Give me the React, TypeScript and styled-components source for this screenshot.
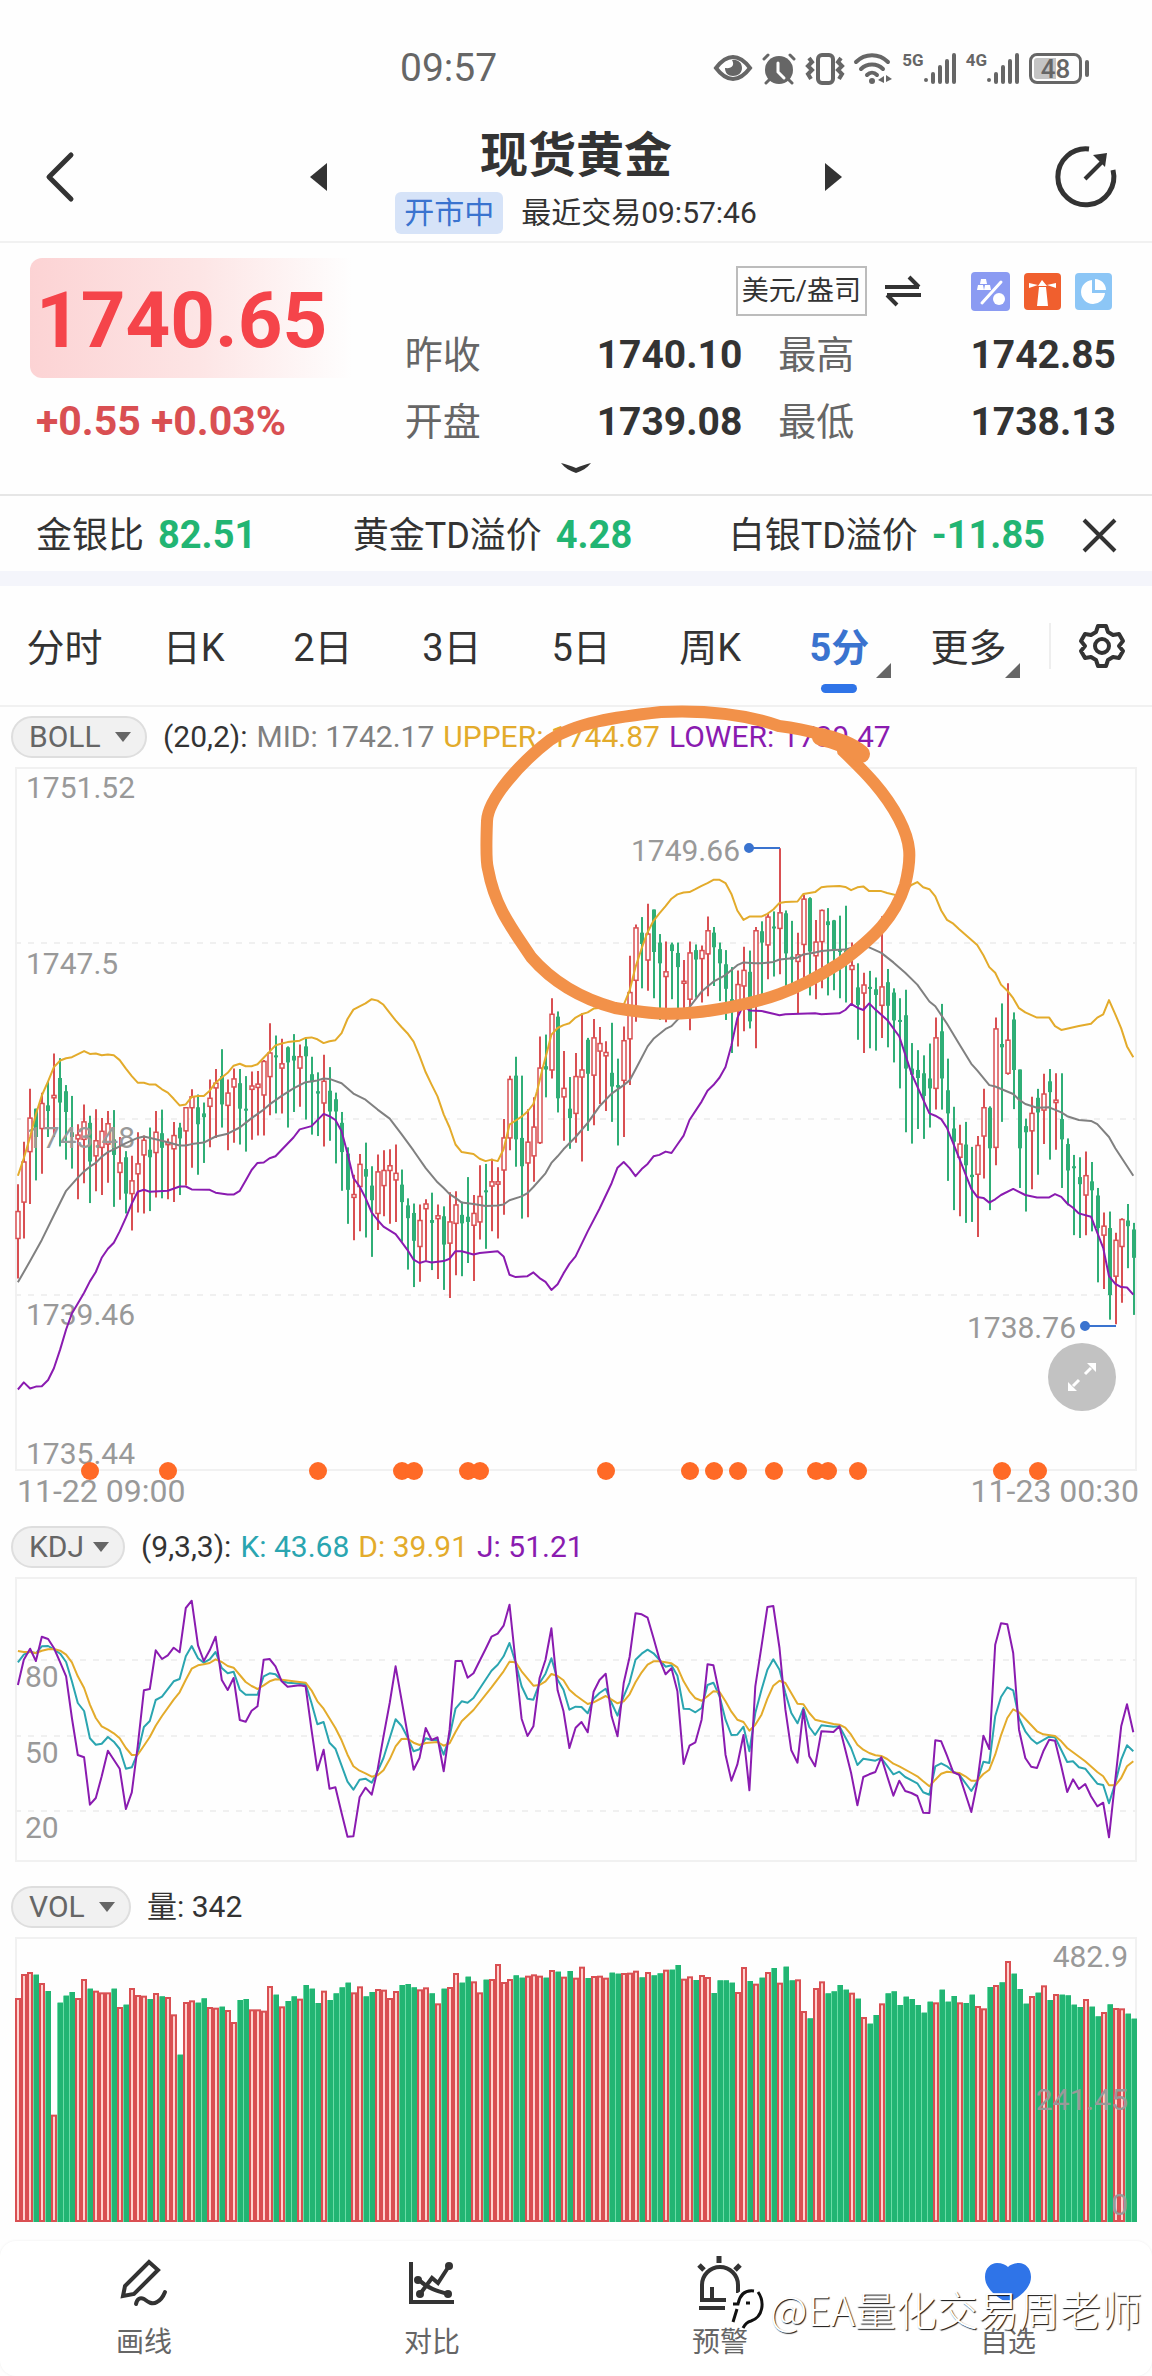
import React, { useState } from "react";
import styled, { createGlobalStyle, css } from "styled-components";

/* ---------- theme ---------- */

const color = {
  ink: "#333333",
  sub: "#666666",
  axis: "#999999",
  line: "#f1f1f1",
  band: "#f4f5fb",
  blue: "#2f74e8",
  link: "#3a73cf",
  up: "#d94f52",
  price: "#f5444a",
  down: "#22b573",
  candleDown: "#2fae76",
  gold: "#e3ab2b",
  teal: "#2aa5b0",
  purple: "#8a1bb0",
  grey: "#808080",
  marker: "#ff6a26",
  pen: "#f29149",
};

const GlobalStyle = createGlobalStyle`
  * { box-sizing: border-box; }
  body {
    margin: 0;
    background: #fefefe;
    color: ${color.ink};
    font-family: Roboto, "Noto Sans CJK SC", sans-serif;
  }
  button, select { font-family: inherit; color: inherit; }
  button { border: 0; background: none; padding: 0; cursor: pointer; }
`;

/* ---------- feed data ---------- */

const candleFeed = `
r 900 958 1015 1100|r 810 853 938 1015|r 698 760 831 942|g 740 740 800 892|r 706 729 782 878|g 682 733 745 800
r 623 712 717 800|g 633 675 727 820|g 690 703 747 848|g 713 790 800 867|r 773 796 804 932|r 731 768 805 898
g 755 770 852 940|r 741 808 840 915|r 760 788 822 923|r 745 772 815 897|g 743 805 838 948|r 800 855 875 933
g 830 843 920 962|r 840 893 920 998|r 790 857 878 960|r 797 807 838 962|g 780 827 843 957|r 745 790 833 928
g 742 792 823 930|r 803 812 816 932|r 768 797 825 938|g 770 780 803 923|r 737 738 787 903|r 699 715 738 865
g 710 737 773 880|g 727 750 758 855|r 678 718 735 822|r 656 686 696 802|g 614 671 731 780|r 678 707 733 828
r 655 677 694 812|g 656 686 740 816|g 671 740 743 831|r 661 692 699 806|r 660 688 695 797|r 637 640 711 797
r 559 622 672 754|g 585 627 631 750|r 592 645 654 750|g 608 610 642 780|g 582 628 638 747|r 604 630 654 736
g 592 608 629 763|g 630 667 684 795|g 663 703 708 798|r 626 682 728 820|g 652 702 746 808|g 706 720 746 856
g 747 770 832 914|g 822 835 912 984|r 880 922 928 1019|r 836 858 905 1000|g 812 868 884 1013|g 862 903 934 1054
r 837 874 962 997|r 828 871 903 968|r 826 861 871 984|r 816 877 891 980|g 869 901 938 1022|g 930 945 972 1081
g 941 961 1020 1118|r 943 977 1032 1107|r 932 942 952 1062|g 918 976 982 1082|r 943 967 973 1101|g 947 968 1028 1124
r 917 980 1025 1141|r 915 944 983 1093|g 937 965 983 1095|g 885 969 980 1067|r 923 962 987 1105|r 860 926 980 1017
g 857 913 917 1037|r 846 895 904 1000|r 864 895 900 1015|r 762 802 870 965|r 670 678 802 828|g 630 670 805 863
g 670 802 862 973|r 741 811 855 970|r 716 779 840 895|r 587 654 812 815|g 583 650 657 716|r 506 540 658 676
g 534 545 718 748|r 618 697 715 808|g 673 740 760 825|r 622 672 750 812|r 538 658 673 852|g 590 594 666 787
r 550 590 669 775|r 567 602 618 730|r 597 621 628 745|g 558 664 693 768|g 634 690 695 818|r 566 596 680 800
r 416 494 592 690|r 350 357 468 556|g 334 367 391 485|r 306 370 425 490|g 318 318 408 506|g 370 388 432 552
r 386 450 460 557|g 388 392 406 508|g 388 410 440 545|r 425 470 474 550|r 386 410 508 574|g 392 404 424 505
r 394 405 422 515|r 333 363 412 502|g 355 367 398 480|g 388 402 432 512|g 404 434 486 552|g 440 508 516 622
r 447 477 520 608|r 397 447 480 576|g 405 450 555 570|r 355 363 508 612|g 343 364 388 502|r 326 334 393 466
g 322 354 358 460|r 188 325 358 455|g 320 326 411 495|g 342 418 424 495|r 367 414 428 538|r 287 296 392 480
g 292 294 407 500|r 340 387 416 508|r 318 320 386 485|g 315 343 351 500|g 340 341 405 489|g 331 403 408 506
g 310 405 425 515|r 388 437 445 520|g 432 483 520 594|r 452 478 495 622|g 448 482 485 612|g 462 487 499 617
r 332 482 521 590|g 444 472 522 610|g 485 494 553 642|g 506 552 555 697|g 488 542 655 790|g 601 655 668 814
g 616 658 675 783|g 627 665 713 804|g 602 676 697 780|r 547 590 697 742|g 518 576 676 742|g 634 701 750 893
g 736 782 810 955|r 774 815 843 968|g 768 816 860 982|g 821 880 885 980|r 798 818 879 1012|r 698 738 798 888
g 735 738 824 955|r 547 571 822 860|g 517 603 610 768|r 474 595 665 668|g 536 551 658 741|g 657 657 824 908
g 761 777 790 958|r 715 750 787 911|g 698 717 748 880|r 666 709 743 815|g 656 682 705 848|r 665 722 727 827
g 665 762 805 908|g 803 815 871 945|g 838 862 864 1008|g 843 885 900 1014|r 831 882 923 1008|g 853 894 913 1000
g 908 924 993 1108|r 960 989 1008 1122|g 958 993 1135 1187|r 1003 1019 1095 1197|r 972 975 1032 1151|g 942 977 989 1078
g 982 996 1056 1177`;

type Candle = { up: boolean; high: number; top: number; bottom: number; low: number };

const candles: Candle[] = candleFeed
  .trim()
  .split(/[|\n]/)
  .map((row) => {
    const [dir, ...v] = row.trim().split(" ");
    const [high, top, bottom, low] = v.map(Number);
    return { up: dir === "r", high, top, bottom, low };
  });

const volumeFeed = `238 166 160 165 193 214 588 249 228 217 238 181 207 216 221 221 207 265 255 208 229 231 238 223 230 235
287 405 250 245 249 236 265 267 261 274 310 241 238 272 272 276 202 225 263 244 230 240 196 207 250 216 241 221 203 189
221 203 230 217 211 213 238 217 196 193 203 212 206 221 254 207 205 163 189 171 188 221 180 181 136 190 181 167 174 171
167 171 174 154 156 174 154 177 144 175 172 171 177 159 162 163 162 156 173 160 167 161 153 150 136 180 173 181 169 175
220 182 182 189 220 145 184 195 174 160 145 192 141 182 182 277 296 208 188 221 215 196 210 222 237 295 312 286 254 221
215 256 231 238 256 279 246 251 210 246 229 251 250 225 262 269 202 199 188 127 162 208 252 232 219 200 241 226 225 227
255 262 241 261 290 280 254 268 269 282 297`
  .split(/\s+/)
  .map(Number);

// every curve arrives in two pages; the second continues where the first ends
type Curve = [string, string];

const upper: Curve = [
  "50,882 66,845 83,800 99,752 115,712 132,682 148,652 165,638 181,633 197,631 230,618 246,624 262,623 278,627 295,625 311,627 327,637 344,655 360,671 376,685 393,685 409,689 425,689 442,699 458,706 474,719 490,733 507,731 523,715 540,713 556,713 572,702 588,685 605,674 621,664 637,649 654,645 670,650 686,650 702,646 719,632 735,619 751,606 768,602 784,599 817,596 833,590 849,589 865,593 882,601 898,597 914,595 931,580 947,550 963,530 980,523 996,517 1013,508 1029,511 1045,520 1062,537 1078,553 1094,567 1110,580 1127,598 1143,628 1160,663 1176,689 1192,714 1209,752 1225,780 1241,816 1258,832 1290,836 1307,846 1323,851 1339,848 1356,851 1372,826 1388,774 1405,765 1421,757 1437,746 1453,730 1463,703 1478,655 1490,620 1502,583 1519,569 1535,563 1551,559 1568,547",
  "16,540 33,536 49,528 98,524 131,520 147,490 163,440 180,400 196,366 212,342 228,326 245,311 261,295 277,286 294,282 310,281 326,275 343,268 359,262 375,255 392,255 408,262 424,285 440,320 457,340 473,333 506,333 522,327 538,318 555,304 571,302 604,301 620,285 636,283 652,281 669,271 685,269 718,268 734,270 750,277 767,271 783,269 799,279 832,279 848,283 865,286 881,290 914,266 930,260 946,271 963,275 979,290 995,320 1011,340 1028,348 1044,360 1093,393 1110,415 1126,440 1142,452 1158,477 1175,490 1191,506 1207,527 1224,536 1256,547 1289,547 1305,565 1322,573 1370,565 1403,560 1420,547 1436,540 1452,510 1469,540 1485,570 1501,608 1518,631",
];
const middle: Curve = [
  "50,1108 83,1063 115,1018 148,966 181,914 213,886 230,873 246,863 262,855 278,842 295,832 311,826 344,813 376,802 393,799 425,805 458,811 490,818 507,818 523,815 556,812 588,799 621,793 654,780 686,760 719,742 735,731 768,713 800,697 833,684 865,680 882,676 898,677 931,686 963,708 996,721 1029,742 1062,761 1094,794 1127,829 1160,866 1192,896 1209,908 1225,921 1241,929 1258,939 1290,942 1323,946 1356,945 1372,943 1388,934 1421,926 1437,919 1453,906 1486,877 1502,855 1519,841 1535,826 1568,800",
  "33,770 65,735 98,708 131,690 147,680 163,657 196,608 212,592 245,571 261,565 294,538 310,525 343,492 375,471 408,457 440,436 457,430 489,432 506,432 538,429 555,424 604,420 620,413 652,409 669,406 702,404 734,403 767,395 799,398 832,410 865,430 897,452 930,477 963,513 979,523 1011,560 1044,603 1077,645 1093,659 1126,690 1142,693 1191,709 1207,721 1224,730 1256,738 1289,737 1322,748 1338,756 1370,764 1403,766 1420,773 1452,800 1469,824 1518,882",
];
const lower: Curve = [
  "50,1335 66,1320 83,1333 99,1329 115,1328 132,1315 148,1290 165,1250 181,1208 197,1174 213,1153 230,1130 246,1106 262,1086 278,1056 295,1037 311,1024 327,1000 344,971 360,941 376,916 393,912 409,916 458,914 490,905 507,905 523,911 572,912 588,918 621,922 637,922 654,914 670,892 686,870 702,855 719,854 735,845 751,841 768,827 800,801 817,784 849,777 882,751 898,756 914,764 931,788 947,835 963,887 980,905 996,929 1013,960 1029,976 1045,990 1078,1006 1094,1022 1110,1039 1127,1060 1143,1067 1160,1063 1176,1066 1209,1063 1225,1058 1241,1042 1258,1042 1290,1049 1307,1046 1356,1042 1372,1053 1388,1092 1405,1097 1437,1095 1453,1087 1470,1099 1486,1107 1502,1124 1519,1112 1535,1089 1551,1069 1568,1053",
  "33,1000 65,952 98,898 114,865 131,853 147,866 163,883 180,868 196,857 212,841 228,838 245,831 261,834 277,816 294,797 310,764 343,725 359,702 375,690 392,674 408,652 424,606 440,548 457,520 473,532 506,533 538,539 555,542 571,540 652,538 669,540 718,538 734,531 750,518 767,526 783,531 799,517 816,530 848,552 881,587 897,625 914,665 963,750 979,755 995,762 1011,781 1044,845 1077,910 1093,927 1110,929 1126,939 1142,932 1158,923 1191,910 1224,923 1256,928 1289,928 1305,921 1322,927 1338,941 1354,950 1370,962 1403,969 1436,1035 1452,1095 1469,1111 1485,1118 1501,1119 1518,1134",
];
const kdjJ: Curve = [
  "50,556 66,480 83,447 99,484 115,411 132,418 148,445 165,488 181,530 197,655 213,766 230,773 246,915 262,895 278,830 295,753 327,807 344,928 360,878 376,740 393,572 409,568 425,452 442,478 458,467 474,444 490,458 507,325 523,303 540,437 556,484 572,452 588,411 605,541 621,571 637,535 654,661 670,666 686,633 702,620 719,480 735,478 751,500 768,545 784,561 817,557 833,560 849,690 865,812 882,750 898,867 914,863 931,940 947,1011 963,1010 980,893 996,864 1013,885 1029,810 1045,710 1062,610 1078,500 1094,600 1110,700 1127,810 1143,775 1160,685 1176,721 1192,713 1209,815 1225,690 1241,484 1258,484 1274,534 1290,521 1307,483 1323,448 1339,411 1356,402 1372,378 1388,315 1405,490 1421,657 1437,709 1453,680 1470,535 1486,480 1502,386 1519,572 1535,635 1551,745 1568,684",
  "16,667 33,698 49,576 65,541 82,522 98,650 114,710 131,550 147,472 163,341 180,344 196,354 212,415 228,478 245,524 261,506 277,575 294,793 310,738 326,728 343,660 359,494 375,497 392,585 408,765 424,843 440,795 457,706 473,872 489,560 506,440 522,322 538,319 555,445 571,630 587,752 604,789 620,630 636,770 652,800 669,695 702,697 718,680 734,750 750,820 767,917 783,832 799,824 816,817 832,773 848,830 865,888 881,843 897,874 914,880 930,889 946,939 963,940 979,722 995,725 1011,768 1028,818 1044,825 1077,937 1093,850 1110,708 1126,748 1142,435 1158,371 1175,374 1191,460 1207,690 1224,775 1240,801 1256,805 1273,755 1289,720 1305,723 1322,800 1338,877 1354,839 1370,868 1387,853 1403,890 1420,920 1436,909 1452,1013 1469,840 1485,680 1501,614 1518,698",
];
const kdjK: Curve = [
  "50,488 66,465 83,456 99,461 115,440 132,439 148,449 165,462 181,487 197,545 213,610 230,634 246,716 262,735 278,732 295,712 311,726 327,748 344,807 360,803 376,760 393,682 409,664 425,601 442,591 474,545 490,538 507,470 523,439 540,476 556,489 572,479 588,457 605,505 621,521 637,516 654,570 670,585 702,585 719,530 735,521 751,524 768,543 784,549 833,553 849,610 865,674 882,667 898,729 914,747 947,846 963,870 980,840 996,837 1013,849 1029,815 1045,775 1078,659 1094,678 1110,712 1127,755 1143,749 1160,716 1176,721 1192,720 1209,765 1225,710 1241,627 1258,605 1274,609 1290,595 1339,513 1356,495 1372,470 1388,430 1405,490 1421,560 1437,597 1453,600 1470,550 1486,522 1502,476 1519,540 1535,570 1551,630 1568,621",
  "16,622 33,641 49,597 65,580 82,567 98,610 114,648 131,590 147,548 163,480 180,462 196,450 212,461 228,480 245,501 261,497 277,528 294,627 310,628 326,638 343,625 359,556 375,549 392,590 408,660 424,706 440,705 457,681 473,755 489,640 506,570 522,510 538,479 555,510 571,580 587,640 604,671 620,625 636,682 652,706 669,677 702,681 718,680 750,745 767,796 783,777 816,783 832,775 865,824 881,816 897,832 930,851 946,878 963,885 979,800 995,791 1011,800 1028,816 1044,825 1077,874 1093,845 1110,786 1126,790 1142,650 1158,592 1175,563 1191,572 1207,655 1224,695 1240,718 1256,732 1289,711 1305,713 1338,787 1354,785 1370,803 1387,807 1420,852 1436,856 1452,911 1469,850 1485,780 1501,737 1518,755",
];
const kdjD: Curve = [
  "50,454 66,457 83,457 99,460 115,453 132,449 148,448 165,453 181,465 197,488 213,530 230,565 246,615 262,655 278,680 295,690 311,701 327,716 344,745 360,766 376,765 393,738 409,712 425,678 442,649 474,600 490,578 507,540 523,507 540,497 556,494 572,490 588,479 605,487 621,499 637,504 654,526 670,547 686,559 702,568 719,557 735,545 751,539 768,540 800,545 833,549 849,572 865,605 882,627 914,685 931,722 947,765 963,800 980,813 996,821 1013,831 1029,827 1045,812 1062,779 1078,740 1094,718 1110,717 1127,729 1143,736 1160,730 1192,727 1209,738 1225,731 1241,697 1258,665 1290,631 1339,563 1372,515 1388,486 1405,488 1421,515 1453,558 1470,556 1486,545 1502,523 1519,529 1535,542 1551,570 1568,587",
  "33,613 49,608 82,589 98,600 114,611 131,605 147,584 163,548 180,518 196,495 212,485 228,485 261,491 277,503 294,545 310,575 326,596 343,603 359,590 375,575 392,577 408,605 424,636 440,660 457,667 473,693 489,675 506,645 522,597 538,558 555,543 571,550 604,612 620,614 636,640 652,660 669,665 702,673 718,675 734,684 750,705 767,735 783,750 799,760 816,767 832,769 848,778 865,792 881,800 914,820 930,830 946,845 963,860 979,840 995,822 1011,816 1044,820 1061,830 1077,843 1093,843 1110,823 1126,810 1142,765 1158,707 1175,655 1191,629 1207,638 1256,695 1273,704 1305,709 1322,725 1338,745 1387,785 1420,817 1436,830 1452,857 1469,857 1485,835 1501,800 1518,785",
];

/* ---------- scales ---------- */

const WIDTH = 1122;
const STEP = 6;
const FEED_PAGE = 1568;

const slotX = (i: number) => 3 + i * STEP;
const curveX = (v: number) => (v - 42) / 2.722;
const priceY = (v: number) => (v - 16) / 2.119;
const kdjY = (v: number) => (v - 232) / 3;
const volumeY = (v: number) => (v - 52) / 3;

const toPoints = (curve: Curve, y: (v: number) => number) =>
  curve
    .flatMap((page, n) =>
      page.split(" ").map((pair) => {
        const [a, b] = pair.split(",").map(Number);
        return `${curveX(a + n * FEED_PAGE).toFixed(1)},${y(b).toFixed(1)}`;
      })
    )
    .join(" ");

/* ---------- shared parts ---------- */

const Page = styled.main`
  position: relative;
  width: 100%;
  overflow: hidden;
`;

const Row = styled.div<{ $gap?: number }>`
  display: flex;
  align-items: center;
  gap: ${(p) => p.$gap ?? 0}px;
`;

const Glyph = styled.svg<{ $w: number; $h: number }>`
  display: block;
  flex: none;
  width: ${(p) => p.$w}px;
  height: ${(p) => p.$h}px;
  overflow: visible;
`;

/* ---------- status bar ---------- */

const StatusBar = styled.div`
  display: grid;
  grid-template-columns: 400fr 752fr;
  align-items: center;
  height: 120px;
  padding-top: 16px;
  color: ${color.sub};
`;

const Clock = styled.time`
  grid-column: 2;
  grid-row: 1;
  font-size: 39px;
  line-height: 48px;
`;

const StatusIcons = styled.div`
  grid-column: 2;
  grid-row: 1;
  justify-self: end;
  display: flex;
  align-items: center;
  gap: 10px;
  margin-right: 70px;
`;

const NetLabel = styled.span`
  align-self: flex-start;
  font-size: 17px;
  line-height: 14px;
  font-weight: 700;
`;

const Battery = styled.span`
  position: relative;
  display: block;
  width: 53px;
  height: 31px;
  border: 3px solid ${color.sub};
  border-radius: 8px;
  background: linear-gradient(90deg, #c4c4c4 22px, transparent 22px) content-box;
  padding: 2px;
  font-size: 26px;
  line-height: 22px;
  font-weight: 500;
  text-align: center;

  &::after {
    content: "";
    position: absolute;
    right: -10px;
    top: 4px;
    width: 4px;
    height: 17px;
    border-radius: 2px;
    background: ${color.sub};
  }
`;

const Signal = ({ label }: { label: string }) => (
  <Row>
    <NetLabel>{label}</NetLabel>
    <Glyph $w={32} $h={31} viewBox="0 0 32 31" stroke={color.sub} strokeWidth={4} strokeLinecap="round">
      <path d="M2 27v0M9 21v8M16 14v15M23 8v21M30 2v27" />
    </Glyph>
  </Row>
);

const Status = () => (
  <StatusBar>
    <Clock>09:57</Clock>
    <StatusIcons>
      <Glyph $w={38} $h={26} viewBox="0 0 38 26" fill="none" stroke={color.sub} strokeWidth={4}>
        <path d="M2 13C8 5 13 2 19 2s11 3 17 11c-6 8-11 11-17 11S8 21 2 13z" />
        <path d="M18 5c3 5 0 9-7 8 0 5 3 8 8 8s9-3 9-8-4-9-10-8z" fill={color.sub} stroke="none" />
      </Glyph>
      <Glyph $w={34} $h={31} viewBox="0 0 34 31" fill="none" stroke={color.sub} strokeWidth={3} strokeLinecap="round">
        <circle cx="17" cy="17" r="14" fill={color.sub} stroke="none" />
        <path d="M2 6l4-4M32 6l-4-4M7 27l-3 3M27 27l3 3" />
        <path d="M16 10v9l6 6" stroke="#fff" />
      </Glyph>
      <Glyph $w={38} $h={31} viewBox="0 0 38 31" fill="none" stroke={color.sub} strokeWidth={4}>
        <rect x="12" y="2" width="15" height="28" rx="4" />
        <path d="M3 5l3 4-4 4 4 4-4 4 3 5M35 5l-3 4 4 4-4 4 4 4-3 5" />
      </Glyph>
      <Glyph $w={38} $h={31} viewBox="0 0 38 31" fill="none" stroke={color.sub} strokeWidth={4} strokeLinecap="round">
        <path d="M2 9C11 0 25 0 34 9M7 16c6-6 16-6 22 0M13 22c3-3 7-3 10 0" />
        <circle cx="18" cy="28" r="3" fill={color.sub} stroke="none" />
        <path d="M30 23v7l-6-3zM32 22v7l6-3z" fill={color.sub} stroke="none" />
      </Glyph>
      <Signal label="5G" />
      <Signal label="4G" />
      <Battery>48</Battery>
    </StatusIcons>
  </StatusBar>
);

/* ---------- title bar ---------- */

const TitleBar = styled.header`
  display: grid;
  grid-template-columns: 1fr minmax(0, 532px) 1fr;
  align-items: center;
  height: 123px;
  padding: 0 35px 8px;
  border-bottom: 2px solid ${color.line};
`;

const BackButton = styled.button`
  justify-self: start;
  padding: 8px 11px;
`;

const RefreshButton = styled.button`
  justify-self: end;
`;

const Switcher = styled.div`
  display: flex;
  align-items: center;
  justify-content: space-between;
`;

const Heading = styled.div`
  text-align: center;
`;

const Title = styled.h1`
  margin: 8px 0;
  font-size: 48px;
  line-height: 56px;
  font-weight: 700;
`;

const Badge = styled.span`
  padding: 0 9px;
  border-radius: 6px;
  background: #d6e3f8;
  color: ${color.link};
  font-size: 30px;
  line-height: 42px;
`;

const LastTrade = styled.span`
  font-size: 30px;
  line-height: 42px;
`;

const Header = () => (
  <TitleBar>
    <BackButton aria-label="返回">
      <Glyph $w={28} $h={50} viewBox="0 0 28 50" fill="none" stroke={color.ink} strokeWidth={5} strokeLinecap="round" strokeLinejoin="round">
        <path d="M25 3L3 25l22 22" />
      </Glyph>
    </BackButton>
    <Switcher>
      <button aria-label="上一个">
        <Glyph $w={17} $h={28} viewBox="0 0 17 28" fill={color.ink}>
          <path d="M17 0v28L0 14z" />
        </Glyph>
      </button>
      <Heading>
        <Title>现货黄金</Title>
        <Row $gap={18}>
          <Badge>开市中</Badge>
          <LastTrade>最近交易09:57:46</LastTrade>
        </Row>
      </Heading>
      <button aria-label="下一个">
        <Glyph $w={17} $h={28} viewBox="0 0 17 28" fill={color.ink}>
          <path d="M0 0v28l17-14z" />
        </Glyph>
      </button>
    </Switcher>
    <RefreshButton aria-label="刷新">
      <Glyph $w={62} $h={62} viewBox="0 0 62 62" fill="none" stroke={color.ink} strokeWidth={5}>
        <path d="M34 3A28 28 0 1 0 58 24" />
        <path d="M30 33L48 15" strokeWidth={4} />
        <path d="M38 9l14-2-2 14z" fill={color.ink} stroke="none" />
      </Glyph>
    </RefreshButton>
  </TitleBar>
);

/* ---------- quote ---------- */

const QuoteGrid = styled.section`
  display: grid;
  grid-template-columns: 375fr 712fr;
  padding: 15px 36px 0 30px;
`;

const PriceBox = styled.div`
  display: flex;
  align-items: center;
  height: 120px;
  margin: 0 36px 10px 0;
  padding: 4px 0 0 6px;
  border-radius: 12px;
  background: linear-gradient(90deg, #fcd3d4, #fde5e5 50%, #fefefe 95%);
  color: ${color.price};
  font-size: 78px;
  font-weight: 700;
`;

const Change = styled.div`
  padding-left: 6px;
  color: ${color.up};
  font-size: 41px;
  line-height: 66px;
  font-weight: 700;
`;

const Tools = styled.div`
  display: flex;
  align-items: center;
  justify-content: flex-end;
  height: 63px;
  padding: 3px 4px 0 0;
`;

const UnitButton = styled.button`
  height: 50px;
  padding: 0 4px;
  border: 2px solid #bcbcbc;
  font-size: 27px;
  line-height: 46px;
`;

const SwapButton = styled.button`
  margin: 0 50px 0 18px;
`;

const Stats = styled.dl`
  display: grid;
  grid-template-columns: 1fr 1fr;
  column-gap: 36px;
  margin: 0;
  padding-top: 1px;
`;

const Stat = styled.div`
  display: flex;
  justify-content: space-between;
  line-height: 67px;

  dt {
    color: ${color.sub};
    font-size: 38px;
  }
  dd {
    margin: 0;
    font-size: 39px;
    font-weight: 700;
  }
`;

const ExpandRow = styled.div`
  display: flex;
  justify-content: center;
  align-items: center;
  height: 40px;
  padding-bottom: 15px;
  border-bottom: 2px solid #e6e6e6;
`;

const stats = [
  ["昨收", "1740.10"],
  ["最高", "1742.85"],
  ["开盘", "1739.08"],
  ["最低", "1738.13"],
];

const Quote = () => (
  <>
    <QuoteGrid>
      <div>
        <PriceBox>1740.65</PriceBox>
        <Change>+0.55 +0.03%</Change>
      </div>
      <div>
        <Tools>
          <UnitButton>美元/盎司</UnitButton>
          <SwapButton aria-label="切换单位">
            <Glyph $w={36} $h={30} viewBox="0 0 36 30" fill="none" stroke={color.ink} strokeWidth={4}>
              <path d="M0 11h34M24 1l10 10M36 19H2M12 29L2 19" />
            </Glyph>
          </SwapButton>
          <Row $gap={14}>
            <Glyph $w={39} $h={39} viewBox="0 0 39 39">
              <rect width="39" height="39" rx="4" fill="#8b9bf2" />
              <path d="M11 31L30 10" stroke="#fff" strokeWidth="3" strokeLinecap="round" />
              <circle cx="28" cy="27" r="6" fill="#fff" />
              <path d="M10 7h5l1 5H9zM7 13h5l1 5H6zM14 13h5l1 5h-7z" fill="#fff" />
            </Glyph>
            <Glyph $w={37} $h={37} viewBox="0 0 37 37">
              <rect width="37" height="37" rx="4" fill="#f05f2e" />
              <path d="M15 14h7l2 19H13zM14 13l4-6 5 6z" fill="#fff" />
              <path d="M5 10l9 2-9 3zM32 10l-9 2 9 3z" fill="#fff" />
            </Glyph>
            <Glyph $w={37} $h={37} viewBox="0 0 37 37">
              <rect width="37" height="37" rx="4" fill="#8cc6f6" />
              <path d="M17 7v13h13A12 12 0 1 1 17 7z" fill="#fff" />
              <path d="M20 6c6 0 11 5 11 11H20z" fill="#fff" />
            </Glyph>
          </Row>
        </Tools>
        <Stats>
          {stats.map(([name, value]) => (
            <Stat key={name}>
              <dt>{name}</dt>
              <dd>{value}</dd>
            </Stat>
          ))}
        </Stats>
      </div>
    </QuoteGrid>
    <ExpandRow>
      <button aria-label="展开">
        <Glyph $w={30} $h={10} viewBox="0 0 30 10" fill={color.ink}>
          <path d="M0 0c5 1 10 3 15 5C20 3 25 1 30 0c-4 5-9 8-15 10C9 8 4 5 0 0z" />
        </Glyph>
      </button>
    </ExpandRow>
  </>
);

/* ---------- ratios ---------- */

const RatioBar = styled.section`
  display: flex;
  align-items: center;
  gap: 38px;
  height: 90px;
  padding: 3px 36px 0;
  border-bottom: 15px solid ${color.band};
`;

const RatioList = styled.div`
  display: flex;
  flex: 1;
  justify-content: space-between;
  font-size: 36px;
  line-height: 48px;
`;

const RatioValue = styled.b`
  margin-left: 14px;
  color: ${color.down};
  font-size: 38px;
`;

const ratios = [
  ["金银比", "82.51"],
  ["黄金TD溢价", "4.28"],
  ["白银TD溢价", "-11.85"],
];

const Ratios = () => (
  <RatioBar>
    <RatioList>
      {ratios.map(([name, value]) => (
        <span key={name}>
          {name}
          <RatioValue>{value}</RatioValue>
        </span>
      ))}
    </RatioList>
    <button aria-label="关闭">
      <Glyph $w={33} $h={33} viewBox="0 0 33 33" stroke={color.ink} strokeWidth={4}>
        <path d="M1 1l31 31M32 1L1 32" />
      </Glyph>
    </button>
  </RatioBar>
);

/* ---------- period tabs ---------- */

const PeriodBar = styled.nav`
  display: flex;
  align-items: center;
  height: 121px;
  border-bottom: 2px solid ${color.line};
`;

const Period = styled.button<{ $active: boolean }>`
  position: relative;
  flex: 1;
  height: 119px;
  padding-bottom: 2px;
  font-size: 38px;
  ${(p) =>
    p.$active &&
    css`
      color: ${color.link};
      font-weight: 700;

      &::before {
        content: "";
        position: absolute;
        left: calc(50% - 18px);
        bottom: 12px;
        width: 36px;
        height: 9px;
        border-radius: 5px;
        background: ${color.blue};
      }
    `}
`;

const Corner = styled.i`
  position: absolute;
  left: calc(50% + 37px);
  bottom: 27px;
  border-left: 15px solid transparent;
  border-bottom: 15px solid ${color.sub};
`;

const SettingsButton = styled.button`
  display: flex;
  justify-content: center;
  width: 103px;
  margin-left: 16px;
  border-left: 2px solid #eeeeee;
`;

const periods = ["分时", "日K", "2日", "3日", "5日", "周K", "5分", "更多"];

const Periods = () => {
  const [active, setActive] = useState("5分");
  return (
    <PeriodBar>
      {periods.map((name, i) => (
        <Period key={name} $active={name === active} onClick={() => setActive(name)}>
          {name}
          {i > 5 && <Corner />}
        </Period>
      ))}
      <SettingsButton aria-label="设置">
        <Glyph $w={44} $h={46} viewBox="0 0 44 46" fill="none" stroke={color.ink} strokeWidth={4} strokeLinejoin="round">
          <path d="M18 3h8l2 6 5 3 6-1 4 7-4 5 4 5-4 7-6-1-5 3-2 6h-8l-2-6-5-3-6 1-4-7 4-5-4-5 4-7 6 1 5-3z" />
          <circle cx="22" cy="23" r="7" />
        </Glyph>
      </SettingsButton>
    </PeriodBar>
  );
};

/* ---------- indicator panels ---------- */

const LegendRow = styled.div`
  display: flex;
  align-items: center;
  gap: 9px;
  height: 60px;
  padding-left: 11px;
  font-size: 30px;
  line-height: 40px;
  white-space: nowrap;
`;

const PillBox = styled.label<{ $width: number }>`
  display: flex;
  align-items: center;
  position: relative;
  width: ${(p) => p.$width}px;
  height: 42px;
  margin-right: 7px;
`;

const PillSelect = styled.select`
  appearance: none;
  width: 100%;
  height: 42px;
  padding: 0 0 0 16px;
  border: 2px solid #dedede;
  border-radius: 21px;
  background: #f1f1f1;
  color: ${color.sub};
  font-size: 30px;
  line-height: 38px;
`;

const PillArrow = styled.i`
  position: absolute;
  right: 16px;
  border: 8px solid transparent;
  border-top: 10px solid ${color.sub};
  border-bottom: 0;
  pointer-events: none;
`;

const Legend = styled.span<{ $tone?: string }>`
  color: ${(p) => p.$tone ?? color.ink};
`;

const IndicatorPill = ({ value, options, width }: { value: string; options: string[]; width: number }) => (
  <PillBox $width={width}>
    <PillSelect aria-label="指标" defaultValue={value}>
      {options.map((o) => (
        <option key={o}>{o}</option>
      ))}
    </PillSelect>
    <PillArrow />
  </PillBox>
);

const Panel = styled.div`
  position: relative;
  margin: 0 15px;
`;

const Plot = styled.svg`
  display: block;
  width: 100%;
  height: auto;
  overflow: visible;
`;

const AxisText = styled.text`
  fill: ${color.axis};
  font-size: 30px;
`;

const Frame = ({ height }: { height: number }) => (
  <rect x="1" y="1" width={WIDTH - 2} height={height - 2} fill="none" stroke={color.line} strokeWidth="2" />
);

const Grid = ({ rows }: { rows: number[] }) => (
  <g stroke="#f0f0f0" strokeWidth="2" strokeDasharray="6 7">
    {rows.map((y) => (
      <path key={y} d={`M0 ${y}H${WIDTH}`} />
    ))}
  </g>
);

const Line = ({ points, tone }: { points: string; tone: string }) => (
  <polyline points={points} fill="none" stroke={tone} strokeWidth="2" strokeLinejoin="round" />
);

const DateRow = styled.div`
  display: flex;
  justify-content: space-between;
  height: 46px;
  margin: 0 13px 0 17px;
  color: ${color.axis};
  font-size: 32px;
  line-height: 40px;
`;

const FullscreenButton = styled.button`
  position: absolute;
  right: 21px;
  bottom: 60px;
  display: flex;
  align-items: center;
  justify-content: center;
  width: 68px;
  height: 68px;
  border-radius: 50%;
  background: #c2c2c2;
`;

const eventMarks = [75, 153, 303, 387, 399, 453, 465, 591, 675, 699, 723, 759, 801, 813, 843, 987, 1023];

const priceLabels: [string, number][] = [
  ["1751.52", 31],
  ["1747.5", 207],
  ["1743.48", 381],
  ["1739.46", 558],
  ["1735.44", 697],
];

const PricePlot = () => (
  <Plot viewBox={`0 0 ${WIDTH} 704`} role="img" aria-label="BOLL">
    <Frame height={704} />
    <Grid rows={[176, 352, 528]} />
    {candles.map((c, i) => {
      const x = slotX(i);
      const top = priceY(c.top);
      const height = Math.max(priceY(c.bottom) - top, 2);
      return c.up ? (
        <g key={i} stroke={color.up}>
          <path d={`M${x} ${priceY(c.high)}V${top}M${x} ${top + height}V${priceY(c.low)}`} strokeWidth="2" />
          <rect x={x - 2} y={top} width="4" height={height} fill="#fff" strokeWidth="1.5" />
        </g>
      ) : (
        <g key={i} fill={color.candleDown}>
          <rect x={x - 1} y={priceY(c.high)} width="2" height={priceY(c.low) - priceY(c.high)} />
          <rect x={x - 2} y={top} width="4" height={height} />
        </g>
      );
    })}
    {priceLabels.map(([text, y]) => (
      <AxisText key={text} x="11" y={y}>
        {text}
      </AxisText>
    ))}
    <Line points={toPoints(middle, priceY)} tone={color.grey} />
    <Line points={toPoints(upper, priceY)} tone={color.gold} />
    <Line points={toPoints(lower, priceY)} tone={color.purple} />
    {eventMarks.map((x) => (
      <circle key={x} cx={x} cy="704" r="9" fill={color.marker} />
    ))}
    <g stroke={color.link} strokeWidth="2" fill={color.link}>
      <path d="M734 81h31M1070 559h31" />
      <circle cx="734" cy="81" r="4" />
      <circle cx="1070" cy="559" r="4" />
    </g>
    <AxisText x="725" y="94" textAnchor="end">
      1749.66
    </AxisText>
    <AxisText x="1061" y="571" textAnchor="end">
      1738.76
    </AxisText>
    <g fill="none" stroke={color.pen} strokeLinecap="round" strokeLinejoin="round">
      <path
        strokeWidth="12"
        d="M841-18C815-32 790-38 764-41C730-53 690-57 646-55C600-50 560-44 535-27C505-4 473 32 472 54C471 80 471 95 473 102C480 140 496 160 516 190C535 212 560 230 600 241C640 248 665 249 705 242C750 234 780 225 825 196C860 170 880 150 890 118C897 90 896 75 884 52C870 25 850 5 828-16"
      />
      <path strokeWidth="18" d="M806-30C822-27 838-20 846-13" />
    </g>
  </Plot>
);

const PricePanel = () => (
  <section>
    <LegendRow>
      <IndicatorPill value="BOLL" options={["BOLL", "MA", "EMA"]} width={136} />
      <Legend>(20,2):</Legend>
      <Legend $tone={color.grey}>MID: 1742.17</Legend>
      <Legend $tone={color.gold}>UPPER: 1744.87</Legend>
      <Legend $tone={color.purple}>LOWER: 1739.47</Legend>
    </LegendRow>
    <Panel>
      <PricePlot />
      <FullscreenButton aria-label="全屏">
        <Glyph $w={32} $h={32} viewBox="0 0 32 32" stroke="#fff" strokeWidth={3} fill="#fff">
          <path d="M19 13l6-6M13 19l-6 6" />
          <path d="M21 2h9v9zM2 21v9h9z" stroke="none" />
        </Glyph>
      </FullscreenButton>
    </Panel>
    <DateRow>
      <span>11-22 09:00</span>
      <span>11-23 00:30</span>
    </DateRow>
  </section>
);

const KdjPanel = () => (
  <section>
    <LegendRow>
      <IndicatorPill value="KDJ" options={["KDJ", "MACD", "RSI"]} width={114} />
      <Legend>(9,3,3):</Legend>
      <Legend $tone={color.teal}>K: 43.68</Legend>
      <Legend $tone={color.gold}>D: 39.91</Legend>
      <Legend $tone={color.purple}>J: 51.21</Legend>
    </LegendRow>
    <Panel>
      <Plot viewBox={`0 0 ${WIDTH} 285`} role="img" aria-label="KDJ">
        <Frame height={285} />
        <Grid rows={[83, 159, 234]} />
        <AxisText x="10" y="110">80</AxisText>
        <AxisText x="10" y="186">50</AxisText>
        <AxisText x="10" y="261">20</AxisText>
        <Line points={toPoints(kdjK, kdjY)} tone={color.teal} />
        <Line points={toPoints(kdjD, kdjY)} tone={color.gold} />
        <Line points={toPoints(kdjJ, kdjY)} tone={color.purple} />
      </Plot>
    </Panel>
  </section>
);

const VolumeSection = styled.section`
  padding: 15px 0 19px;
`;

const VolumePanel = () => (
  <VolumeSection>
    <LegendRow>
      <IndicatorPill value="VOL" options={["VOL", "OBV"]} width={120} />
      <Legend>量: 342</Legend>
    </LegendRow>
    <Panel>
      <Plot viewBox={`0 0 ${WIDTH} 285`} role="img" aria-label="VOL">
        <Frame height={285} />
        {volumeFeed.map((v, i) => {
          const y = volumeY(v);
          return candles[i].up ? (
            <rect key={i} x={slotX(i) - 2} y={y} width="4" height={284 - y} fill="#ffd3d0" stroke={color.up} strokeWidth="2" />
          ) : (
            <g key={i}>
              <rect x={slotX(i) - 3} y={y} width="6" height={285 - y} fill="#6bdca6" />
              <rect x={slotX(i) - 2} y={y} width="5" height={285 - y} fill={color.down} />
            </g>
          );
        })}
        <AxisText x="1113" y="30" textAnchor="end">482.9</AxisText>
        <AxisText x="1113" y="173" textAnchor="end">241.45</AxisText>
        <AxisText x="1113" y="278" textAnchor="end">0</AxisText>
      </Plot>
    </Panel>
  </VolumeSection>
);

/* ---------- bottom bar ---------- */

const BottomBar = styled.nav`
  position: relative;
  display: flex;
  height: 135px;
  padding-top: 17px;
  border-radius: 16px;
  background: #ffffff;
  box-shadow: 0 0 3px #eeeeee;
`;

const BottomItem = styled.button`
  display: flex;
  flex: 1;
  flex-direction: column;
  align-items: center;
  gap: 13px;
  color: ${color.sub};
  font-size: 28px;
  line-height: 40px;
`;

const Watermark = styled.div`
  position: absolute;
  right: 10px;
  top: 41px;
  display: flex;
  align-items: center;
  gap: 6px;
  color: #ffffff;
  font-family: "Noto Sans CJK SC", sans-serif;
  font-size: 41px;
  line-height: 52px;
  font-weight: 300;
  text-shadow: 1px 1px 1px #111111;
  pointer-events: none;
`;

const Bottom = () => (
  <BottomBar>
    <BottomItem>
      <Glyph $w={52} $h={52} viewBox="0 0 52 52" fill="none" stroke={color.ink} strokeWidth={4}>
        <path d="M5 38l2-10L31 4l9 8-24 24z" />
        <path d="M18 46c1-5 4-7 8-5 4 3 8 6 13 3 4-2 6-5 8-10" strokeLinecap="round" />
      </Glyph>
      画线
    </BottomItem>
    <BottomItem>
      <Glyph $w={52} $h={52} viewBox="0 0 52 52" fill="none" stroke={color.ink} strokeWidth={4}>
        <path d="M5 4v40h43" />
        <path d="M13 22c8 8 18 11 29 14M14 36L26 20l6 5L43 8" />
        <g fill={color.ink} stroke="none">
          <circle cx="12" cy="22" r="4" />
          <circle cx="42" cy="36" r="4" />
          <circle cx="14" cy="36" r="4" />
          <circle cx="43" cy="8" r="4" />
        </g>
      </Glyph>
      对比
    </BottomItem>
    <BottomItem>
      <Glyph $w={52} $h={52} viewBox="0 0 52 52" fill="none" stroke={color.ink} strokeWidth={4}>
        <path d="M44 35V27A18 18 0 0 0 8 27V42H32M18 29v11M5 50h26" />
        <path d="M25-2v7M5 7l5 5M46 7l-5 5" strokeWidth={5} />
      </Glyph>
      预警
    </BottomItem>
    <BottomItem>
      <Glyph $w={52} $h={52} viewBox="0 0 52 52" fill={color.blue}>
        <path d="M26 45C12 38 3 29 3 19 3 10 9 5 15 5c5 0 9 2 11 4 2-2 6-4 11-4 6 0 12 5 12 14 0 10-9 19-23 26z" />
      </Glyph>
      自选
    </BottomItem>
    <Watermark>
      <Glyph $w={32} $h={40} viewBox="0 0 32 40" fill="none">
        <path d="M2 16C6 4 20 0 26 6c8 8 6 24-6 28-4 1-6 2-8 6M3 20l5-1-4 14" stroke="#fff" strokeWidth="6" />
        <path d="M1 16h5C8 6 14 2 22 3M26 4c7 10 5 25-7 29-4 1-6 3-8 7M5 21L1 34M14 15h4" stroke="#111" strokeWidth="3" />
      </Glyph>
      @EA量化交易周老师
    </Watermark>
  </BottomBar>
);

/* ---------- app ---------- */

export default function App() {
  return (
    <Page>
      <GlobalStyle />
      <Status />
      <Header />
      <Quote />
      <Ratios />
      <Periods />
      <PricePanel />
      <KdjPanel />
      <VolumePanel />
      <Bottom />
    </Page>
  );
}
